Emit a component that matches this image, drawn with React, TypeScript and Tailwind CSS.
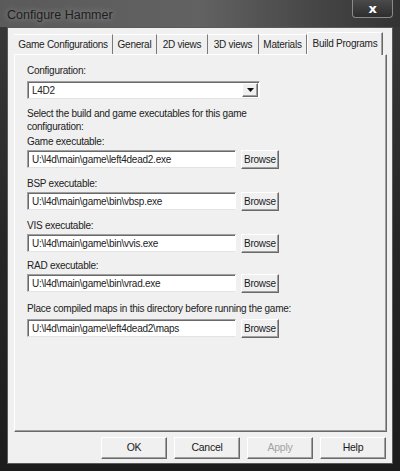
import React from 'react';

const font = { fontFamily: '"Liberation Sans", Arial, sans-serif' };

const tabs = [
  { label: 'Game Configurations', w: 'w-[99px]' },
  { label: 'General', w: 'w-[44px]' },
  { label: '2D views', w: 'w-[51px]' },
  { label: '3D views', w: 'w-[51px]' },
  { label: 'Materials', w: 'w-[48px]' },
];

const fields = [
  { label: 'Game executable:', value: 'U:\\l4d\\main\\game\\left4dead2.exe', mt: 'mt-[2px]', gap: 'mt-[2px]' },
  { label: 'BSP executable:', value: 'U:\\l4d\\main\\game\\bin\\vbsp.exe', mt: 'mt-[8px]', gap: 'mt-[2px]' },
  { label: 'VIS executable:', value: 'U:\\l4d\\main\\game\\bin\\vvis.exe', mt: 'mt-[8px]', gap: 'mt-[2px]' },
  { label: 'RAD executable:', value: 'U:\\l4d\\main\\game\\bin\\vrad.exe', mt: 'mt-[6px]', gap: 'mt-[2px]' },
  { label: 'Place compiled maps in this directory before running the game:', value: 'U:\\l4d\\main\\game\\left4dead2\\maps', mt: 'mt-[9px]', gap: 'mt-[4px]' },
];

function Raised({ children, className = '', disabled = false }: { children: React.ReactNode; className?: string; disabled?: boolean }) {
  return (
    <div
      className={`flex items-center justify-center bg-[#f0f0f0] border border-t-white border-l-white border-r-[#696969] border-b-[#696969] shadow-[inset_-1px_-1px_0_#a0a0a0] ${disabled ? 'text-[#a3a3a3]' : 'text-[#1a1a1a]'} ${className}`}
    >
      {children}
    </div>
  );
}

function Sunken({ children, className = '' }: { children: React.ReactNode; className?: string }) {
  return (
    <div
      className={`flex items-center bg-white border border-t-[#a0a0a0] border-l-[#a0a0a0] border-r-white border-b-[#e3e3e3] shadow-[inset_1px_1px_0_#6a6a6a] ${className}`}
    >
      {children}
    </div>
  );
}

export default function App() {
  return (
    <div
      style={font}
      className="w-[400px] h-[471px] flex flex-col bg-gradient-to-b from-[#3a3a3a] via-[#262626] to-[#1c1c1c] text-[10px] tracking-[-0.25px] text-[#222] overflow-hidden"
    >
      {/* title bar */}
      <div className="relative h-[27px] flex items-center px-[7px] pt-[3px] bg-gradient-to-r from-[#5a5a5a] via-[#626262] to-[#333333]">
        <span className="text-[12.5px] tracking-normal text-[#1e1e1e] [text-shadow:0_0_6px_#a0a0a0]">Configure Hammer</span>
        <div className="absolute right-[7px] top-0 w-[41px] h-[18px] flex items-center justify-center rounded-b-[4px] border border-t-0 border-[#8a8a8a] bg-gradient-to-b from-[#4a4a4a] to-[#2e2e2e]">
          <span className="text-white font-bold text-[13px] leading-none" style={{ fontFamily: '"DejaVu Sans", sans-serif' }}>
            x
          </span>
        </div>
      </div>

      {/* client area */}
      <div className="mx-[7px] h-[437px] bg-[#f0f0f0] border border-[#5a5a5a] flex flex-col px-[6px] pt-[3px]">
        {/* tab strip */}
        <div className="flex items-end h-[23px]">
          {tabs.map((t) => (
            <div
              key={t.label}
              className={`${t.w} h-[20px] flex items-center justify-center whitespace-nowrap border-r border-r-[#7a7a7a] border-t border-t-white`}
            >
              {t.label}
            </div>
          ))}
          <div className="w-[76px] h-[23px] flex items-center justify-center whitespace-nowrap bg-[#f0f0f0] border-l border-t border-white border-r border-r-[#696969] shadow-[inset_-1px_0_0_#a0a0a0] relative -mb-px z-10 pb-[2px]">
            Build Programs
          </div>
        </div>

        {/* tab panel */}
        <div className="w-[373px] h-[378px] border border-t-white border-l-white border-r-[#696969] border-b-[#696969] shadow-[inset_-1px_-1px_0_#a0a0a0] px-[12px] pt-[9px]">
          <div className="leading-[13px]">Configuration:</div>
          <Sunken className="mt-[4px] w-[233px] h-[18px] justify-between pl-[4px] pr-[1px]">
            <span>L4D2</span>
            <Raised className="w-[16px] h-[14px]">
              <svg width="7" height="4" viewBox="0 0 7 4">
                <path d="M0 0h7L3.5 4z" fill="#111" />
              </svg>
            </Raised>
          </Sunken>

          <div className="mt-[8px] leading-[13px]">
            Select the build and game executables for this game
            <br />
            configuration:
          </div>

          {fields.map((f) => (
            <div key={f.label} className={f.mt}>
              <div className="leading-[13px]">{f.label}</div>
              <div className={`flex items-start gap-[5px] ${f.gap}`}>
                <Sunken className="w-[209px] h-[18px] pl-[4px]">
                  <span className="whitespace-nowrap">{f.value}</span>
                </Sunken>
                <Raised className="w-[38px] h-[19px]">Browse</Raised>
              </div>
            </div>
          ))}
        </div>

        {/* buttons */}
        <div className="flex justify-end gap-[7px] mt-[5px]">
          <Raised className="w-[66px] h-[22px] text-[10.5px]">OK</Raised>
          <Raised className="w-[66px] h-[22px] text-[10.5px]">Cancel</Raised>
          <Raised className="w-[66px] h-[22px] text-[10.5px]" disabled>
            Apply
          </Raised>
          <Raised className="w-[66px] h-[22px] text-[10.5px]">Help</Raised>
        </div>
      </div>
    </div>
  );
}
